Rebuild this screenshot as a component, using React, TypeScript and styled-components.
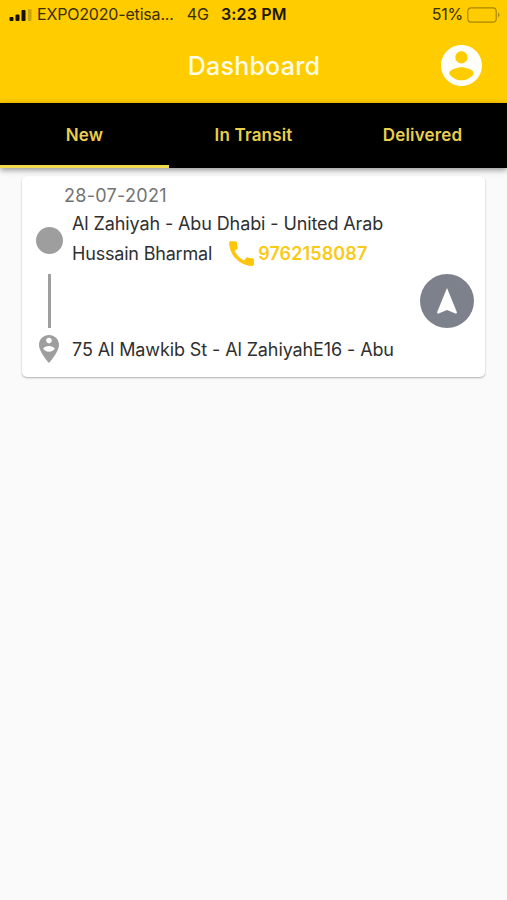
import React from "react";
import styled, { createGlobalStyle } from "styled-components";

const GlobalStyle = createGlobalStyle`
  * { box-sizing: border-box; }
  body { margin: 0; background: #fafafa; font-family: Inter, "Liberation Sans", sans-serif; }
`;

const Screen = styled.div`
  min-height: 900px;
  background: #fafafa;
`;

const Header = styled.header`
  height: 103px;
  background: #ffcc00;
`;

const StatusBar = styled.div`
  display: flex;
  align-items: center;
  height: 29px;
  padding: 0 7px 0 9px;
  color: #3a2e05;
`;

const StatusText = styled.span<{ $gap: number; $spacing?: number; $bold?: boolean }>`
  margin-left: ${(p) => p.$gap}px;
  font-size: 16px;
  line-height: 19px;
  white-space: nowrap;
  letter-spacing: ${(p) => p.$spacing ?? 0}px;
  font-weight: ${(p) => (p.$bold ? 600 : 400)};
  color: ${(p) => (p.$bold ? "#1c1600" : "inherit")};
`;

const BatteryGroup = styled.div`
  display: flex;
  align-items: center;
  gap: 4px;
  margin-left: auto;
`;

const TitleBar = styled.div`
  display: grid;
  grid-template-columns: 1fr auto 1fr;
  align-items: center;
  height: 74px;
  padding: 0 25px 2px;
`;

const Title = styled.h1`
  grid-column: 2;
  margin: 2px 0 0 1px;
  font-size: 25px;
  line-height: 32px;
  font-weight: 500;
  letter-spacing: 0.25px;
  color: #fffce8;
`;

const AccountButton = styled.button`
  justify-self: end;
  display: flex;
  padding: 0;
  border: 0;
  background: none;
`;

const Tabs = styled.nav`
  position: relative;
  display: grid;
  grid-template-columns: repeat(3, 1fr);
  height: 65px;
  background: #000;
  box-shadow: 0 2px 6px rgba(0, 0, 0, 0.42);
`;

const Tab = styled.button<{ $active?: boolean }>`
  padding: 2px 0 0;
  border: 0;
  border-bottom: 3px solid ${(p) => (p.$active ? "#f3d94d" : "transparent")};
  background: none;
  font: 600 17px/24px Inter, sans-serif;
  letter-spacing: 0.17px;
  color: #e9cf4c;
`;

const Content = styled.main`
  padding: 8px 22px;
`;

const Card = styled.article`
  display: flex;
  height: 201px;
  padding: 7px 11px 0 13px;
  border-radius: 5px;
  background: #fff;
  box-shadow: 0 1px 2px rgba(0, 0, 0, 0.3);
`;

const Details = styled.div`
  flex: 1;
`;

const DateText = styled.div`
  padding-left: 29px;
  font-size: 18px;
  line-height: 25px;
  letter-spacing: 0.3px;
  color: #737373;
`;

const Stop = styled.div`
  display: flex;
  align-items: center;
  gap: 9px;
`;

const Marker = styled.div`
  display: flex;
  justify-content: center;
  width: 28px;
`;

const Dot = styled.div`
  width: 27px;
  height: 27px;
  margin-top: 4px;
  border-radius: 50%;
  background: #9e9e9e;
`;

const Line = styled.div<{ $spacing?: number }>`
  display: flex;
  align-items: center;
  height: 30px;
  font-size: 18px;
  letter-spacing: ${(p) => p.$spacing ?? -0.11}px;
  white-space: nowrap;
  color: #303030;
`;

const Phone = styled.a`
  display: flex;
  align-items: center;
  margin-left: 13px;
  font-weight: 600;
  letter-spacing: 0.1px;
  color: #f9ca16;
`;

const Connector = styled.div`
  width: 3px;
  height: 54px;
  margin: 6px 0 6px 13px;
  background: #9e9e9e;
`;

const NavigateButton = styled.button`
  display: flex;
  align-items: center;
  justify-content: center;
  width: 54px;
  height: 54px;
  margin-top: 91px;
  padding: 0;
  border: 0;
  border-radius: 50%;
  background: #7d818c;
`;

export default function App() {
  return (
    <Screen>
      <GlobalStyle />
      <Header>
        <StatusBar>
          <svg width="23" height="12" viewBox="0 0 23 12" fill="#171200">
            <rect x="0.5" y="8" width="4" height="4" rx="1" />
            <rect x="6.5" y="5.5" width="4" height="6.5" rx="1" />
            <rect x="12.5" y="1" width="4" height="11" rx="1" />
            <rect x="19" y="0" width="3.5" height="12" rx="1" fill="#caa20b" />
          </svg>
          <StatusText $gap={5} $spacing={-0.18}>EXPO2020-etisa...</StatusText>
          <StatusText $gap={13}>4G</StatusText>
          <StatusText $gap={12} $spacing={0.15} $bold>3:23 PM</StatusText>
          <BatteryGroup>
            <StatusText $gap={0} $spacing={-0.2}>51%</StatusText>
            <svg width="33" height="16" viewBox="0 0 33 16" fill="none">
              <rect x="0.8" y="0.8" width="28.4" height="14.4" rx="3.5" stroke="#a98600" strokeWidth="1.2" />
              <path d="M31 5.5Q34 8 31 10.5Z" fill="#a98600" />
            </svg>
          </BatteryGroup>
        </StatusBar>
        <TitleBar>
          <Title>Dashboard</Title>
          <AccountButton aria-label="Account">
            <svg width="41" height="41" viewBox="2 2 20 20" fill="#fffef8">
              <path d="M12 2C6.48 2 2 6.48 2 12s4.48 10 10 10 10-4.48 10-10S17.52 2 12 2zm0 3c1.66 0 3 1.34 3 3s-1.34 3-3 3-3-1.34-3-3 1.34-3 3-3zm0 14.2c-2.5 0-4.71-1.28-6-3.22.03-1.99 4-3.08 6-3.08 1.99 0 5.97 1.09 6 3.08-1.29 1.94-3.5 3.22-6 3.22z" />
            </svg>
          </AccountButton>
        </TitleBar>
      </Header>
      <Tabs>
        <Tab $active>New</Tab>
        <Tab>In Transit</Tab>
        <Tab>Delivered</Tab>
      </Tabs>
      <Content>
        <Card>
          <Details>
            <DateText>28-07-2021</DateText>
            <Stop>
              <Marker><Dot /></Marker>
              <div>
                <Line>Al Zahiyah - Abu Dhabi - United Arab</Line>
                <Line $spacing={-0.19}>
                  Hussain Bharmal
                  <Phone>
                    <svg width="33" height="33" viewBox="0 0 24 24" fill="#fdc50b">
                      <path d="M20.01 15.38c-1.23 0-2.42-.2-3.53-.56-.35-.12-.74-.03-1.01.24l-1.57 1.97c-2.83-1.35-5.48-3.9-6.89-6.83l1.95-1.66c.27-.28.35-.67.24-1.02-.37-1.11-.56-2.3-.56-3.53 0-.54-.45-.99-.99-.99H4.19C3.65 3 3 3.24 3 3.99 3 13.28 10.73 21 20.01 21c.71 0 .99-.63.99-1.18v-3.45c0-.54-.45-.99-.99-.99z" />
                    </svg>
                    9762158087
                  </Phone>
                </Line>
              </div>
            </Stop>
            <Connector />
            <Stop>
              <Marker>
                <svg width="20" height="28" viewBox="5 2 14 20" fill="#9e9e9e" preserveAspectRatio="none">
                  <path d="M12 2C8.13 2 5 5.13 5 9c0 5.25 7 13 7 13s7-7.75 7-13c0-3.87-3.13-7-7-7zm0 2c1.1 0 2 .9 2 2 0 1.11-.9 2-2 2s-2-.89-2-2c0-1.1.9-2 2-2zm0 10c-1.67 0-3.14-.85-4-2.15.02-1.32 2.67-2.05 4-2.05s3.98.73 4 2.05c-.86 1.3-2.33 2.15-4 2.15z" />
                </svg>
              </Marker>
              <Line>75 Al Mawkib St - Al ZahiyahE16 - Abu</Line>
            </Stop>
          </Details>
          <NavigateButton aria-label="Navigate">
            <svg width="22" height="28" viewBox="0 0 22 28" fill="#fff">
              <path d="M11 1L21 25.5L20 26.8L11 23L2 26.8L1 25.5Z" />
            </svg>
          </NavigateButton>
        </Card>
      </Content>
    </Screen>
  );
}
